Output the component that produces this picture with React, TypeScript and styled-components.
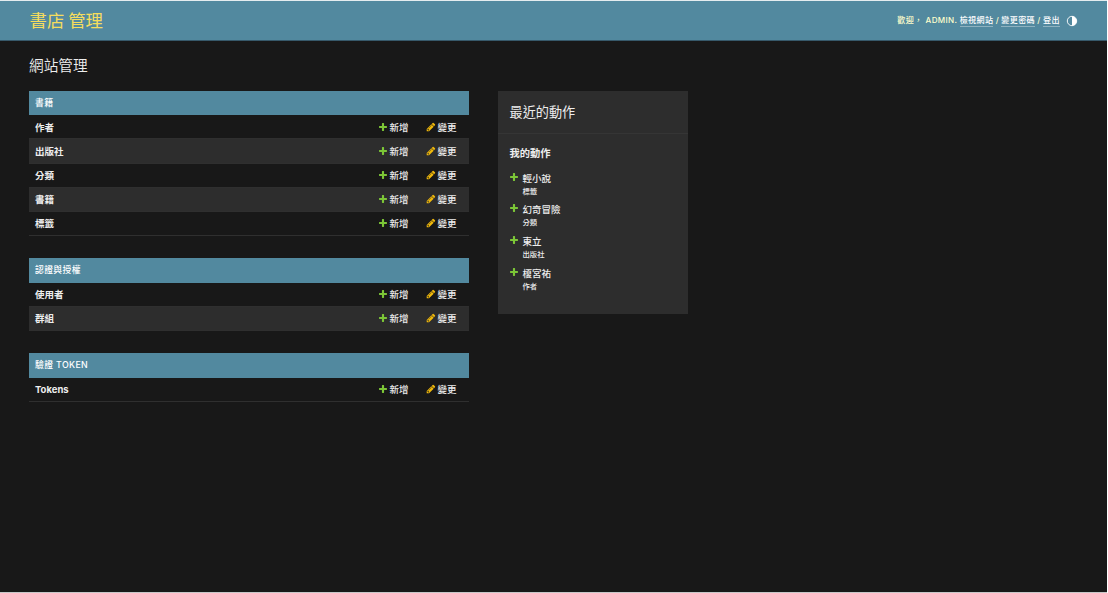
import React from "react";
import styled, { createGlobalStyle } from "styled-components";

const GlobalStyle = createGlobalStyle`
  * { box-sizing: border-box; }
  body {
    margin: 0;
    background: #fff;
    overflow: hidden;
    font-family: Inter, "Noto Sans CJK TC", sans-serif;
    font-size: 9.5px;
    color: #eee;
  }
  h1, h2, h3, ul { margin: 0; padding: 0; }
`;

const Page = styled.div`
  width: 1107px;
  height: 593px;
  border-top: 1px solid #e4ecef;
  border-bottom: 1px solid #c8c8c8;
  background: #181818;
`;

const Header = styled.header`
  display: flex;
  align-items: center;
  justify-content: space-between;
  height: 40px;
  padding: 0 29px 0 29.5px;
  background: #52899f;
  border-bottom: 1px solid #37596a;
`;

const SiteName = styled.h1`
  height: 24px;
  font-size: 17.4px;
  line-height: 24px;
  font-weight: 400;
  word-spacing: -1px;
  color: #f5dd5d;
`;

const UserTools = styled.div`
  display: flex;
  align-items: center;
  height: 14px;
  font-size: 8.05px;
  line-height: 11px;
  letter-spacing: 0.36px;
  font-weight: 500;
  color: #ffc;
  white-space: pre;
`;

const ToolLink = styled.a`
  color: #fff;
  border-bottom: 1px solid rgba(255, 255, 255, 0.35);
`;

const Slash = styled.span`
  width: 8px;
  text-align: center;
`;

const Strong = styled.span`
  font-weight: 500;
`;

const UserName = styled.span`
  margin: 0 2.4px 0 3px;
`;

const ThemeIcon = styled.svg`
  width: 12px;
  height: 12px;
  margin-left: 6.2px;
`;

const Main = styled.main`
  padding: 15px 29px 0;
`;

const Title = styled.h2`
  margin-bottom: 14.8px;
  font-size: 14.65px;
  line-height: 20px;
  font-weight: 350;
`;

const Columns = styled.div`
  display: flex;
  align-items: flex-start;
  gap: 29.5px;
`;

const Modules = styled.div`
  display: flex;
  flex-direction: column;
  gap: 22.2px;
  width: 439.5px;
`;

const Caption = styled.div`
  height: 24.4px;
  padding-left: 6px;
  background: #52899f;
  font-size: 8.8px;
  line-height: 24.4px;
  font-weight: 500;
  letter-spacing: 0.37px;
  color: #fff;
`;

const Row = styled.div<{ $shaded: boolean }>`
  display: flex;
  align-items: center;
  height: 24.2px;
  padding: 0 0 0.4px 6px;
  border-bottom: 1px solid #2f2f2f;
  background: ${(p) => (p.$shaded ? "#2d2d2d" : "transparent")};
`;

const Name = styled.span`
  flex: 1;
  font-weight: 700;
`;

const Action = styled.a<{ $width: number }>`
  display: flex;
  align-items: center;
  gap: 2.1px;
  width: ${(p) => p.$width}px;
  font-weight: 500;
`;

const Glyph = styled.svg`
  flex: none;
  width: 10px;
  height: 10px;
`;

const Recent = styled.aside`
  width: 190px;
  height: 223px;
  background: #2d2d2d;
`;

const RecentTitle = styled.h2`
  height: 43px;
  padding-left: 11.5px;
  border-bottom: 1px solid #353535;
  font-size: 13.15px;
  line-height: 42px;
  font-weight: 400;
`;

const MyTitle = styled.h3`
  padding: 12px 0 0 11.5px;
  font-size: 10.25px;
  line-height: 15px;
  font-weight: 700;
`;

const Actions = styled.ul`
  padding: 11px 11.2px;
  list-style: none;
`;

const Entry = styled.li`
  display: flex;
  gap: 3.3px;
  height: 31.7px;
`;

const EntryText = styled.div`
  font-weight: 500;
  line-height: 14px;
`;

const Kind = styled.div`
  font-size: 7.35px;
  line-height: 11px;
`;

const Plus = () => (
  <Glyph viewBox="0 0 1792 1792">
    <path fill="#7cc637" d="M1600 796v192q0 40-28 68t-68 28h-416v416q0 40-28 68t-68 28h-192q-40 0-68-28t-28-68v-416h-416q-40 0-68-28t-28-68v-192q0-40 28-68t68-28h416v-416q0-40 28-68t68-28h192q40 0 68 28t28 68v416h416q40 0 68 28t28 68z" />
  </Glyph>
);

const Pencil = () => (
  <Glyph viewBox="0 0 1792 1792">
    <path fill="#efb80b" d="M491 1536l91-91-235-235-91 91v107h128v128h107zm523-928q0-22-22-22-10 0-17 7l-542 542q-7 7-7 17 0 22 22 22 10 0 17-7l542-542q7-7 7-17zm-54-192l416 416-832 832h-416v-416zm683 96q0 53-37 90l-166 166-416-416 166-165q36-38 90-38 53 0 91 38l235 234q37 39 37 91z" />
  </Glyph>
);

const groups = [
  { title: "書籍", rows: ["作者", "出版社", "分類", "書籍", "標籤"] },
  { title: "認證與授權", rows: ["使用者", "群組"] },
  { title: "驗證 TOKEN", rows: ["Tokens"] },
];

const recent = [
  ["輕小說", "標籤"],
  ["幻奇冒險", "分類"],
  ["東立", "出版社"],
  ["榎宮祐", "作者"],
];

export default function App() {
  return (
    <>
      <GlobalStyle />
      <Page>
        <Header>
          <SiteName>書店 管理</SiteName>
          <UserTools>
            <Strong>歡迎，</Strong>
            <UserName>ADMIN.</UserName>
            <ToolLink>檢視網站</ToolLink>
            <Slash>/</Slash>
            <ToolLink>變更密碼</ToolLink>
            <Slash>/</Slash>
            <ToolLink>登出</ToolLink>
            <ThemeIcon viewBox="0 0 12 12">
              <circle cx="6" cy="6" r="4.7" fill="none" stroke="#fff" strokeWidth="0.9" />
              <path d="M6 1.3a4.7 4.7 0 0 1 0 9.4z" fill="#fff" />
            </ThemeIcon>
          </UserTools>
        </Header>
        <Main>
          <Title>網站管理</Title>
          <Columns>
            <Modules>
              {groups.map((g) => (
                <section key={g.title}>
                  <Caption>{g.title}</Caption>
                  {g.rows.map((name, i) => (
                    <Row key={name} $shaded={i % 2 === 1}>
                      <Name>{name}</Name>
                      <Action $width={48}><Plus />新增</Action>
                      <Action $width={43}><Pencil />變更</Action>
                    </Row>
                  ))}
                </section>
              ))}
            </Modules>
            <Recent>
              <RecentTitle>最近的動作</RecentTitle>
              <MyTitle>我的動作</MyTitle>
              <Actions>
                {recent.map(([name, kind]) => (
                  <Entry key={name}>
                    <Plus />
                    <EntryText>
                      {name}
                      <Kind>{kind}</Kind>
                    </EntryText>
                  </Entry>
                ))}
              </Actions>
            </Recent>
          </Columns>
        </Main>
      </Page>
    </>
  );
}
